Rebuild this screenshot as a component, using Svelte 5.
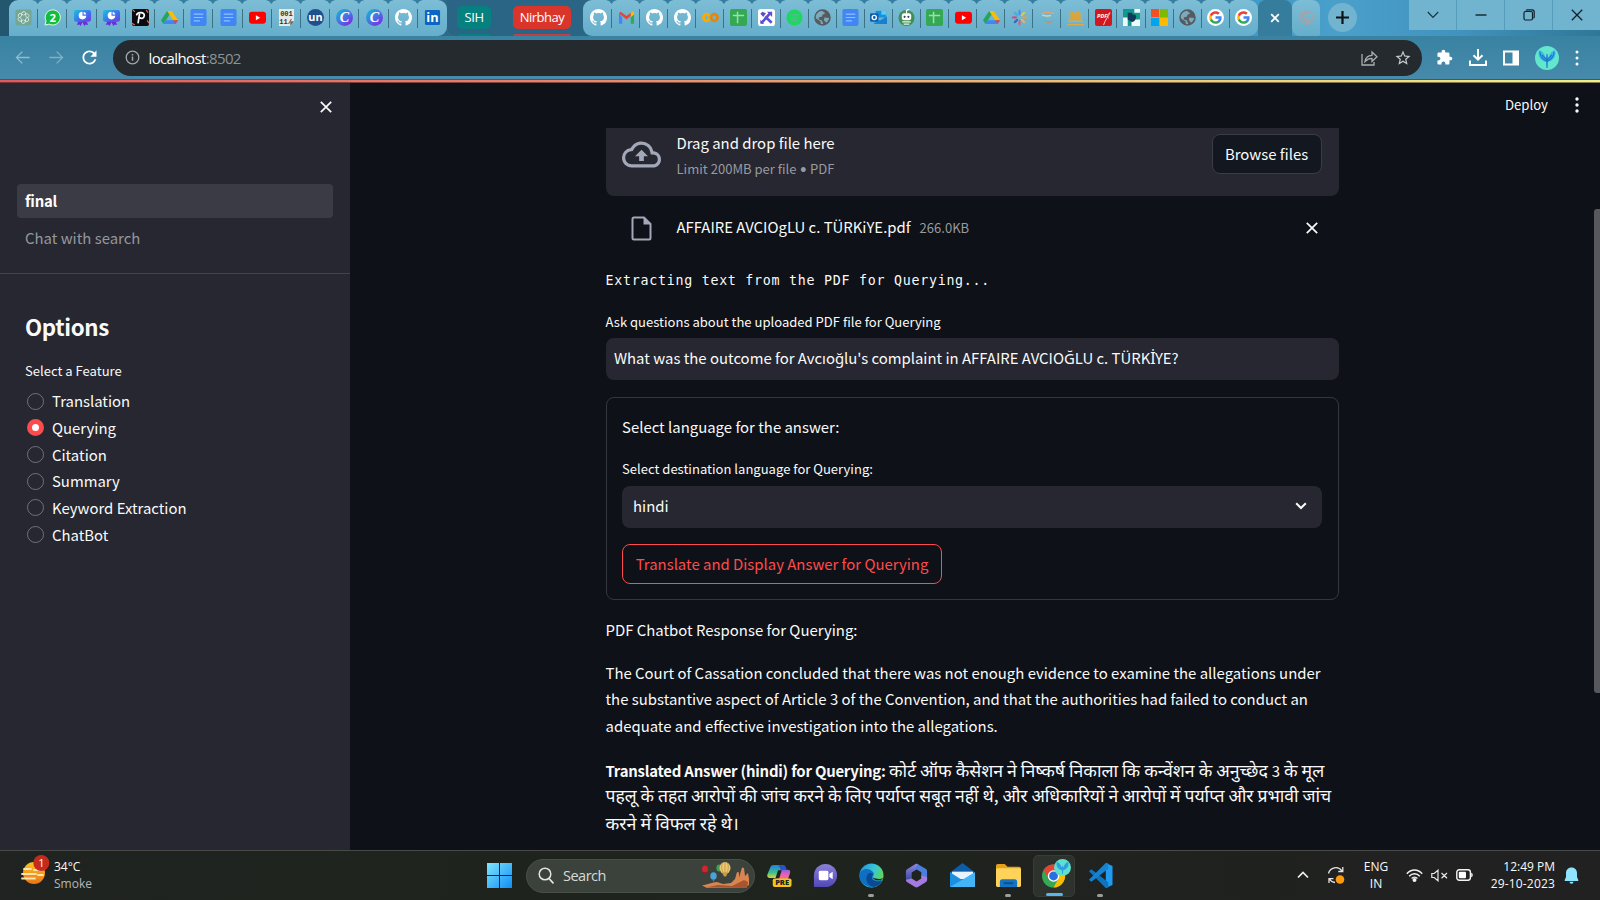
<script>
  const groupA = ['gpt', 'wa', 'ppt', 'ppt', 'pi', 'drive', 'docs', 'docs', 'yt', 'bin', 'un', 'canva', 'canva', 'gh', 'li'];
  const groupB = ['gh', 'gmail', 'gh', 'gh', 'colab', 'sheets', 'px', 'spot', 'globe', 'docs', 'outlook', 'bot', 'sheets', 'yt', 'drive', 'burst', 'swirl', 'gold', 'pdf', 'teal', 'ms', 'globe', 'goog', 'goog'];
  const features = ['Translation', 'Querying', 'Citation', 'Summary', 'Keyword Extraction', 'ChatBot'];
  const apps = ['copilot', 'meet', 'edge', 'm365', 'mail', 'files', 'chrome', 'code'];
  const running = ['edge', 'files', 'code'];
  const petals = [
    [0, '#4a90e2'], [45, '#e8c34a'], [90, '#e0a04a'], [135, '#e8b45a'],
    [180, '#e05a7a'], [225, '#2a6fc0'], [270, '#d04a8a'], [315, '#3fb0e0']
  ];
  let selected = $state('Querying');
</script>

{#snippet fav(name)}
  <svg class="fav" viewBox="0 0 18 18">
    {#if name === 'gpt'}
      <rect x=".5" y=".5" width="17" height="17" rx="2" fill="#74a694" />
      <g fill="none" stroke="#e4f2ee" stroke-width=".9">
        {#each [0, 60, 120, 180, 240, 300] as a}
          <path d="M9 6.300l2.600-1.500a2.600 2.600 0 0 1 3.600 3.400L12 10.200" transform="translate(1 1) scale(.89) rotate({a} 9 9)" />
        {/each}
      </g>
    {:else if name === 'wa'}
      <path d="M1 17l1.200-4.300A8 8 0 1 1 5.500 16z" fill="#12bd3c" stroke="#e9fff0" stroke-width="1" />
      <text x="9.200" y="13.300" font-size="12" font-weight="700" fill="#fff" text-anchor="middle">2</text>
    {:else if name === 'ppt'}
      <path d="M5 12l-2 5 2.500-.7 1.500 1.700 2-4 2 4 1.500-1.700 2.500.7-2-5z" fill="#6a2fd8" />
      <rect x="0" y="1" width="18" height="12.500" rx="2.500" fill="url(#gPpt)" />
      <circle cx="9" cy="7" r="4" fill="#fff" />
      <path d="M9.600 2.500v4h4" stroke="#4a6ef0" stroke-width="1.200" fill="none" />
    {:else if name === 'pi'}
      <rect width="18" height="18" rx="2" fill="#0b0a10" />
      <path d="M1 1l2 2M15 1l2 3M0 15l3 2M16 12l2 3" stroke="#e0694a" stroke-width="1.300" />
      <path d="M6.500 14.500L8 5M5 6c1-3 8.500-3 8 1-.4 3-3 3.500-4.700 2.300" stroke="#fff" stroke-width="1.800" fill="none" stroke-linecap="round" />
    {:else if name === 'drive'}
      <path d="M6.500 2h5L18 12h-5z" fill="#fbbc04" />
      <path d="M6.500 2L0 12l2.600 4L9 6z" fill="#23a55a" />
      <path d="M5 12h13l-2.600 4H2.600z" fill="#4285f4" />
      <path d="M13 12h5l-2.600 4z" fill="#ea4335" />
    {:else if name === 'docs'}
      <rect x=".5" width="17" height="18" rx="2" fill="#4285f4" />
      <path d="M4 5.500h10M4 9h10M4 12.500h6.500" stroke="#8fc0ff" stroke-width="1.300" />
    {:else if name === 'yt'}
      <rect x="0" y="3" width="18" height="12.500" rx="3" fill="#f00" />
      <path d="M7.300 6.500v5.400l4.600-2.700z" fill="#fff" />
    {:else if name === 'bin'}
      <path d="M1 0h16v13l-4 5H1z" fill="#e9e9e4" />
      <path d="M17 13l-4 5v-5z" fill="#6b6b66" />
      <text x="9" y="7.500" font-size="7.500" font-weight="700" fill="#333" text-anchor="middle" font-family="Liberation Mono, monospace">001</text>
      <text x="8" y="15.500" font-size="7.500" font-weight="700" fill="#333" text-anchor="middle" font-family="Liberation Mono, monospace">11/</text>
    {:else if name === 'un'}
      <circle cx="9" cy="9" r="9" fill="#1f4f8c" />
      <text x="9" y="12.500" font-size="11.500" font-weight="700" fill="#fff" text-anchor="middle">un</text>
    {:else if name === 'canva'}
      <circle cx="9" cy="9" r="9" fill="url(#gCanva)" />
      <text x="9" y="14" font-size="15" font-style="italic" font-weight="700" fill="#fff" text-anchor="middle" font-family="Liberation Serif, serif">C</text>
    {:else if name === 'gh'}
      <path transform="scale(1.125)" fill="#fff" d="M8 0C3.580 0 0 3.580 0 8c0 3.540 2.290 6.530 5.470 7.590.4.070.55-.17.55-.38 0-.19-.01-.82-.01-1.490-2.010.37-2.530-.49-2.690-.94-.09-.23-.48-.94-.82-1.130-.28-.15-.68-.52-.01-.53.63-.01 1.080.58 1.230.82.72 1.210 1.870.87 2.330.66.070-.52.28-.87.51-1.070-1.780-.2-3.640-.89-3.640-3.950 0-.87.31-1.590.82-2.150-.08-.2-.36-1.020.08-2.120 0 0 .67-.21 2.200.82.64-.18 1.320-.27 2-.27.68 0 1.360.09 2 .27 1.530-1.040 2.200-.82 2.200-.82.44 1.100.16 1.920.08 2.120.51.56.82 1.270.82 2.150 0 3.070-1.870 3.750-3.650 3.950.29.25.54.73.54 1.480 0 1.070-.01 1.930-.01 2.200 0 .21.15.46.55.38A8.013 8.013 0 0016 8c0-4.420-3.580-8-8-8z" />
    {:else if name === 'li'}
      <rect x="1" y="1" width="16" height="16" rx="1.500" fill="#0a66c2" />
      <text x="9" y="14" font-size="13.500" font-weight="700" fill="#fff" text-anchor="middle">in</text>
    {:else if name === 'gmail'}
      <path d="M1 4v11.500h3.500V9z" fill="#4285f4" />
      <path d="M17 4v11.500h-3.500V9z" fill="#34a853" />
      <path d="M1 4.500L9 11l8-6.500-2-1.700-6 4.600-6-4.600z" fill="#ea4335" />
      <path d="M13.500 4v4.500L17 6V4c0-1.500-2-2-3.500 0z" fill="#fbbc04" />
    {:else if name === 'colab'}
      <g fill="none" stroke-width="3"><circle cx="5" cy="9" r="3.500" stroke="#f9ab00" /><circle cx="13" cy="9" r="3.500" stroke="#e8860c" /></g>
    {:else if name === 'sheets'}
      <rect width="18" height="18" rx="2" fill="#34a853" />
      <path d="M3 7h12M8 3v12" stroke="#9be0ac" stroke-width="1.600" />
    {:else if name === 'px'}
      <rect width="18" height="18" rx="3" fill="#fff" />
      <path d="M3.500 15l9-10M14.500 14.500L7.500 8" stroke="#5b4fd0" stroke-width="2.800" />
      <path d="M9.500 3H15v5.500zM2.500 5l2-2 4 1.500-3 4zM2.500 11.500v4h4z" fill="#5b4fd0" />
    {:else if name === 'spot'}
      <circle cx="9" cy="9" r="8.500" fill="#1ed760" />
      <path d="M4 6.500c3.500-1 7-.6 10 .9M4.700 9.500c3-.8 6-.4 8.300.8M5.300 12.200c2.400-.6 4.700-.3 6.700.7" stroke="#58b98c" stroke-width="1.500" fill="none" />
    {:else if name === 'globe'}
      <circle cx="9" cy="9" r="8" fill="#555b5f" />
      <path d="M8 1.500c-4 .4-7 4-6.500 8L5 12l2 1.200V15l1 1.500c1-.1 1.600-.4 1.800-1.200L8 12l-3-1V9l3.500-1 .5-2 3-1.600z" fill="#82b9cd" opacity=".85" />
      <path d="M11 9l5 .5c-.3 2-1.400 3.800-3 5l-2.500-2.500z" fill="#82b9cd" opacity=".85" />
      <circle cx="9" cy="9" r="8" fill="none" stroke="#555b5f" stroke-width="1.500" />
    {:else if name === 'outlook'}
      <path d="M6 2h11v7H6z" fill="#1490df" /><path d="M12 2h5v4h-5z" fill="#50d0ff" />
      <path d="M4 8l7 4.500L18 8v8H4z" fill="#2aa0e8" /><path d="M4 16l14-8v8z" fill="#1a7fd0" />
      <rect x="0" y="4.500" width="9" height="9" rx="1" fill="#0f5fb5" />
      <circle cx="4.500" cy="9" r="2.200" fill="none" stroke="#fff" stroke-width="1.400" />
    {:else if name === 'bot'}
      <circle cx="9" cy="9.500" r="8.500" fill="#3f8f55" />
      <path d="M9 5V1.500l3-1.200" stroke="#fff" fill="none" stroke-width="1.200" />
      <rect x="4" y="4.500" width="10" height="7.500" rx="2.500" fill="#fff" />
      <circle cx="7" cy="8.300" r="1.100" fill="#345" /><circle cx="11" cy="8.300" r="1.100" fill="#345" />
      <path d="M4.500 13.700h9M6 16h6" stroke="#e8f5ea" stroke-width="1.300" />
    {:else if name === 'burst'}
      {#each petals as [a, c]}
        <ellipse cx="9" cy="3.600" rx="1.200" ry="3" fill={c} transform="rotate({a} 9 9)" />
      {/each}
    {:else if name === 'swirl'}
      <g fill="none" stroke-width="1.500" stroke-linecap="round">
        <path d="M3 5c3-2 8-1.500 12-.5" stroke="#e8a070" /><path d="M4 6.500c3 1.500 6 1 8 .5" stroke="#d8d4b0" />
        <path d="M6 9c-1 1.500-.5 3 1 4.200" stroke="#5bb8c8" /><path d="M8 13.500c2 .6 4 .3 5.500-.7" stroke="#e0884a" />
      </g>
    {:else if name === 'gold'}
      <path d="M3 3v9M5.500 2v10M8 4v8M10 3v9M12.500 2v10M15 4v8" stroke="#dba63c" stroke-width="1.800" />
      <path d="M1 13h16M0 16.500h18" stroke="#e0aa3c" stroke-width="1.500" />
    {:else if name === 'pdf'}
      <rect width="18" height="18" rx="2" fill="#d3171f" />
      <text x="7.500" y="10" font-size="6" font-weight="700" font-style="italic" fill="#fff" text-anchor="middle">PDF</text>
      <path d="M9 17c2-6 5-9 7-13-3 1-3 4-2 6" stroke="#ffd0cf" fill="none" />
    {:else if name === 'teal'}
      <rect width="18" height="18" fill="#13998c" />
      <path d="M0 9h5v9H0zM12 0h6v4h-6zM13 11h5v7H9v-4z" fill="#eefaf9" />
      <path d="M5 4h5v2c3-1 5 1 3.500 4-.8 3-3 4-4.500 3.500L5 11z" fill="#12395a" />
    {:else if name === 'ms'}
      <path d="M0 0h8.500v8.500H0z" fill="#f25022" /><path d="M9.500 0H18v8.500H9.500z" fill="#7fba00" />
      <path d="M0 9.500h8.500V18H0z" fill="#00a4ef" /><path d="M9.500 9.500H18V18H9.500z" fill="#ffb900" />
    {:else if name === 'goog'}
      <circle cx="9" cy="9" r="9" fill="#fff" />
      <g transform="translate(1.700 1.700) scale(.61)">
        <path fill="#4285f4" d="M22.560 12.250c0-.78-.07-1.530-.2-2.250H12v4.260h5.920c-.26 1.370-1.040 2.530-2.210 3.310v2.770h3.570c2.080-1.920 3.280-4.740 3.280-8.090z" />
        <path fill="#34a853" d="M12 23c2.970 0 5.460-.98 7.280-2.660l-3.570-2.770c-.98.66-2.230 1.060-3.710 1.060-2.860 0-5.290-1.930-6.160-4.530H2.180v2.840C3.990 20.530 7.700 23 12 23z" />
        <path fill="#fbbc05" d="M5.840 14.090c-.22-.66-.35-1.360-.35-2.090s.13-1.430.35-2.090V7.070H2.180C1.430 8.550 1 10.220 1 12s.43 3.450 1.180 4.930l2.850-2.220.81-.62z" />
        <path fill="#ea4335" d="M12 5.380c1.620 0 3.060.56 4.210 1.640l3.150-3.150C17.450 2.090 14.970 1 12 1 7.700 1 3.990 3.470 2.180 7.070l3.660 2.840c.87-2.600 3.300-4.530 6.160-4.530z" />
      </g>
    {/if}
  </svg>
{/snippet}

{#snippet app(name)}
  <svg class="appicon" viewBox="0 0 26 26">
    {#if name === 'copilot'}
      <path d="M7 2h9l-4.500 13.500H3c-2.200 0-3.200-1.600-2.600-3.500L3.500 4.500C4.200 2.800 5.200 2 7 2z" fill="url(#gCop1)" />
      <path d="M12 2h5c2 0 2.600 1.500 3.300 5h-6z" fill="#2457c4" />
      <path d="M13.500 7h8.300c2 0 2.700 1.500 2.200 3.200l-2.500 8H10.500z" fill="url(#gCop2)" />
      <path d="M11.500 7.500h3.800l-2.600 8.500H8.700z" fill="#1e251d" />
      <rect x="6" y="16" width="19.500" height="9" rx="2" fill="#f7c416" />
      <text x="15.700" y="23.400" font-size="7.800" font-weight="800" fill="#222" text-anchor="middle">PRE</text>
    {:else if name === 'meet'}
      <path d="M1 25V13A12 12 0 1 1 13 25z" fill="url(#gMeet)" />
      <rect x="6" y="8" width="10" height="10" rx="1.500" fill="#fff" /><path d="M17 11.500l3.500-2.500v8L17 14.500z" fill="#fff" />
    {:else if name === 'edge'}
      <circle cx="13" cy="13" r="12.500" fill="url(#gEdge)" />
      <path d="M.5 12C3 4 12 5 15 10c1 2-.5 3.500-1 4.500-1 3 3 5 10 3-3 7-12 10-18 5C2 20 .3 16 .5 12z" fill="#0f6fc4" />
      <path d="M9 12c-3 4-1 11 6 13 4 0 7-3 9-6.500-5 2-10 0-10.500-3.500-.2-1.400 1-2.500 1-3.500-1-1.500-4-1.500-5.500.5z" fill="#0a4a94" />
      <path d="M14 14.500c1 3.500 5 4 9.500 3 2-1.500 2.300-2 2-2-3 1.500-8 1.500-11.500-1z" fill="#1d231d" />
    {:else if name === 'm365'}
      <path d="M12 1L4 6c-1.300.8-2 1.500-2 3v8.500l6 .5V10l7-4.500V1.500c-1-.8-2-1-3-.5z" fill="url(#gM1)" />
      <path d="M14 1l8.500 5c1 .6 1.500 1.500 1.500 2.500V18l-6-3V9.500L12 6z" fill="#4c7fdc" />
      <path d="M24 14.500v3c0 1-.5 2-1.500 2.500L14.500 25c-1 .5-2 .5-3 0L3.500 20c-1-.6-1.500-1.500-1.500-2.500l6-1.500 5 3.200 5-3.200v-3z" fill="#a47ae0" />
    {:else if name === 'mail'}
      <path d="M0 10L13 0l13 10v5H0z" fill="#0e5ca8" /><path d="M2 9h22v8H2z" fill="#e8f3fb" />
      <path d="M0 9.500L13 18l13-8.500V25H0z" fill="#1a8fe0" /><path d="M0 25l26-15.500V25z" fill="#43b5f5" />
    {:else if name === 'files'}
      <path d="M0 3c0-1 .6-2 2-2h7l3 3h12c1 0 2 .8 2 2v5H0z" fill="#e6a11c" />
      <rect x="0" y="5.500" width="26" height="19.500" rx="1.500" fill="#ffd35a" />
      <path d="M4 25v-5.500c0-1.500 1-2.500 2.500-2.500h13c1.500 0 2.500 1 2.500 2.500V25z" fill="#1573c4" /><path d="M8 20h10v2H8z" fill="#0b4f90" />
    {:else if name === 'chrome'}
      <circle cx="12" cy="13.500" r="12" fill="#34a853" />
      <path d="M12 13.500L1.600 7.500A12 12 0 0 1 22.400 7.500z" fill="#ea4335" />
      <path d="M12 13.500L22.400 7.500A12 12 0 0 1 12 25.500L17 16.500z" fill="#fbbc04" />
      <path d="M1.600 7.500L7 16.500l5-3z" fill="#ea4335" />
      <circle cx="12" cy="13.500" r="6" fill="#fff" /><circle cx="12" cy="13.500" r="4.600" fill="#2a6fe0" />
    {:else if name === 'code'}
      <path d="M18.500 0L25.500 3.200V22.800L18.500 26z" fill="#1f9cf0" />
      <path d="M1 8.500l2.500-2L21 20v5.500L18.500 26z" fill="#0f73bd" />
      <path d="M1 17.500l2.500 2L21 6V.5L18.500 0z" fill="#1583d0" />
    {/if}
  </svg>
{/snippet}

<svg width="0" height="0" class="defs">
  <defs>
    <linearGradient id="gPpt" x1="0" y1="0" x2="1" y2="1"><stop offset="0" stop-color="#19c3dc" /><stop offset=".6" stop-color="#3f6cf0" /><stop offset="1" stop-color="#7a35e6" /></linearGradient>
    <linearGradient id="gCanva" x1="0" y1="0" x2=".8" y2="1"><stop offset="0" stop-color="#10bfcc" /><stop offset=".55" stop-color="#4a72e4" /><stop offset="1" stop-color="#7a2be0" /></linearGradient>
    <linearGradient id="gWin" x1="0" y1="0" x2="1" y2="1"><stop offset="0" stop-color="#7fe6fd" /><stop offset="1" stop-color="#0f8df5" /></linearGradient>
    <linearGradient id="gCop1" x1="0" y1="0" x2="0" y2="1"><stop offset="0" stop-color="#1f7fe8" /><stop offset=".6" stop-color="#3fc08a" /><stop offset="1" stop-color="#e0d040" /></linearGradient>
    <linearGradient id="gCop2" x1="0" y1="0" x2="0" y2="1"><stop offset="0" stop-color="#8a5fe0" /><stop offset=".4" stop-color="#e060c0" /><stop offset="1" stop-color="#f08060" /></linearGradient>
    <linearGradient id="gMeet" x1="0" y1="0" x2="0" y2="1"><stop offset="0" stop-color="#8a80dc" /><stop offset="1" stop-color="#5148b8" /></linearGradient>
    <linearGradient id="gEdge" x1="0" y1="0" x2="1" y2=".4"><stop offset="0" stop-color="#1f8fe0" /><stop offset=".6" stop-color="#36c6d8" /><stop offset="1" stop-color="#5fd65a" /></linearGradient>
    <linearGradient id="gM1" x1="0" y1="0" x2="0" y2="1"><stop offset="0" stop-color="#8f86e8" /><stop offset="1" stop-color="#3b4a9c" /></linearGradient>
    <linearGradient id="gSun" x1="0" y1="0" x2="0" y2="1"><stop offset="0" stop-color="#f9c51f" /><stop offset="1" stop-color="#ec7417" /></linearGradient>
  </defs>
</svg>

<div class="screen">
  <header class="tabstrip">
    <div class="tabs first">
      {#each groupA as t}<div class="tab a">{@render fav(t)}</div>{/each}
    </div>
    <div class="groups">
      <div class="group sih"><span>SIH</span></div>
      <div class="group nir"><span>Nirbhay</span></div>
    </div>
    <div class="tabs second">
      {#each groupB as t}<div class="tab b">{@render fav(t)}</div>{/each}
    </div>
    <div class="active-tab">
      <svg width="10" height="10" viewBox="0 0 10 10"><path d="M1.200 1.200l7.600 7.600M8.800 1.200L1.200 8.800" stroke="#fff" stroke-width="1.800" /></svg>
    </div>
    <div class="tab lone">
      <svg class="fav" viewBox="0 0 24 24"><path fill="#a3a4ab" d="M12 2C6.480 2 2 6.480 2 12s4.480 10 10 10 10-4.480 10-10S17.520 2 12 2zm-1 17.930c-3.950-.49-7-3.850-7-7.930 0-.62.08-1.210.21-1.790L9 15v1c0 1.100.9 2 2 2v1.930zm6.900-2.540c-.26-.81-1-1.390-1.900-1.390h-1v-3c0-.55-.45-1-1-1H8v-2h2c.55 0 1-.45 1-1V7h2c1.100 0 2-.9 2-2v-.41c2.930 1.190 5 4.060 5 7.410 0 2.080-.8 3.970-2.100 5.390z" /></svg>
    </div>
    <div class="newtab"><svg width="13" height="13" viewBox="0 0 13 13"><path d="M6.500 0v13M0 6.500h13" stroke="#0c1216" stroke-width="2.200" /></svg></div>
    <div class="winctl">
      <div><svg width="12" height="8" viewBox="0 0 12 8"><path d="M.8 1l5.200 5.500L11.200 1" fill="none" stroke="#1c3440" stroke-width="1.200" /></svg></div>
      <div><svg width="12" height="8" viewBox="0 0 12 8"><path d="M.5 4h11" stroke="#0d1a22" stroke-width="1.300" /></svg></div>
      <div><svg width="12" height="12" viewBox="0 0 12 12" fill="none" stroke="#10202a" stroke-width="1.200"><rect x="1" y="2.500" width="8.500" height="8.500" rx="1.500" /><path d="M3 1.500Q3.500.8 4.500.8H9q2.200 0 2.200 2.200v5q0 .8-.8 1.200" /></svg></div>
      <div><svg width="12" height="12" viewBox="0 0 12 12"><path d="M.8.8l10.400 10.400M11.200.8L.8 11.200" stroke="#10202a" stroke-width="1.300" /></svg></div>
    </div>
  </header>

  <div class="toolbar">
    <svg class="nav" viewBox="0 0 24 24" fill="#8fbdd0"><path d="M21 11.200H6.400l6-6L11.200 4l-8 8 8 8 1.200-1.200-6-6H21z" /></svg>
    <svg class="nav" viewBox="0 0 24 24" fill="#7fb1c7"><path d="M3 11.200h14.600l-6-6L12.800 4l8 8-8 8-1.200-1.200 6-6H3z" /></svg>
    <svg class="nav reload" viewBox="0 0 24 24" fill="#fff"><path d="M17.650 6.350C16.200 4.900 14.210 4 12 4c-4.420 0-7.990 3.580-7.990 8s3.570 8 7.990 8c3.730 0 6.840-2.550 7.730-6h-2.080c-.82 2.330-3.040 4-5.650 4-3.310 0-6-2.690-6-6s2.690-6 6-6c1.660 0 3.140.69 4.220 1.780L13 11h7V4l-2.350 2.350z" /></svg>
    <div class="omnibox">
      <svg width="15" height="15" viewBox="0 0 15 15"><circle cx="7.500" cy="7.500" r="6.300" fill="none" stroke="#a2a7aa" stroke-width="1.300" /><path d="M7.500 6.500v4.200M7.500 3.900v1.500" stroke="#a2a7aa" stroke-width="1.500" /></svg>
      <span class="url">localhost<i>:8502</i></span>
      <svg class="share" width="17" height="16" viewBox="0 0 17 16" fill="none" stroke="#abb0b2" stroke-width="1.300"><path d="M1 4v11h12v-3M4 11.500C4.500 8 7 5.500 11 5.300V2l5 4.800-5 4.700V8.300c-3 0-5 1-7 3.200z" /></svg>
      <svg width="18" height="18" viewBox="0 0 24 24" fill="#c6cacc"><path d="M22 9.240l-7.190-.62L12 2 9.190 8.630 2 9.240l5.460 4.730L5.820 21 12 17.270 18.180 21l-1.630-7.030L22 9.240zM12 15.400l-3.760 2.270 1-4.280-3.320-2.880 4.380-.38L12 6.100l1.710 4.040 4.380.38-3.320 2.880 1 4.280L12 15.400z" /></svg>
    </div>
    <div class="actions">
      <svg width="17" height="17" viewBox="0 0 24 24" fill="#fff"><path d="M20.500 11H19V7c0-1.100-.9-2-2-2h-4V3.500C13 2.120 11.880 1 10.500 1S8 2.120 8 3.500V5H4c-1.100 0-1.990.9-1.990 2v3.800H3.500c1.490 0 2.700 1.210 2.700 2.700s-1.210 2.700-2.700 2.700H2V20c0 1.100.9 2 2 2h3.800v-1.500c0-1.490 1.210-2.700 2.700-2.700 1.490 0 2.700 1.210 2.700 2.700V22H17c1.100 0 2-.9 2-2v-4h1.500c1.380 0 2.500-1.120 2.500-2.500S21.880 11 20.500 11z" /></svg>
      <svg width="18" height="17" viewBox="0 0 18 17" fill="none" stroke="#fff" stroke-width="2"><path d="M9 0v10M4.500 6.200L9 10.700l4.500-4.500M1 11.500V16h16v-4.500" /></svg>
      <svg width="16" height="16" viewBox="0 0 16 16"><rect x="1" y="1.500" width="14" height="13" fill="none" stroke="#fff" stroke-width="2" /><path d="M9.500 2H15v12H9.500z" fill="#fff" /></svg>
      <svg width="24" height="24" viewBox="0 0 24 24"><circle cx="12" cy="12" r="12" fill="#62e6cc" /><path d="M4 4c-1.500 6 1 10 7 12l.5 4h1l.5-4c6-2 8.500-6 7-12-3 1-5.500 3.500-6.500 8L12 9l-1.500 3C9.500 7.500 7 5 4 4z" fill="#3db4ea" /><path d="M12 8v14M5 6c0 4 2 7 7 9.500M19 6c0 4-2 7-7 9.500M7 9c1 1 3 3 5 5M17 9c-1 1-3 3-5 5" stroke="#1a78c8" fill="none" stroke-width="1.100" /></svg>
      <svg width="4" height="16" viewBox="0 0 4 16" fill="#fff"><circle cx="2" cy="2" r="1.500" /><circle cx="2" cy="8" r="1.500" /><circle cx="2" cy="14" r="1.500" /></svg>
    </div>
  </div>
  <div class="decor"></div>

  <div class="page">
    <aside>
      <div class="closebar"><svg width="12" height="12" viewBox="0 0 12 12"><path d="M.8.8l10.400 10.400M11.200.8L.8 11.200" stroke="#fafafa" stroke-width="1.700" /></svg></div>
      <nav>
        <div class="navitem on">final</div>
        <div class="navitem">Chat with search</div>
      </nav>
      <div class="options">
        <h2>Options</h2>
        <p class="lab">Select a Feature</p>
        {#each features as f}
          <label class="opt"><input type="radio" value={f} bind:group={selected} /><i class:sel={selected === f}></i><span>{f}</span></label>
        {/each}
      </div>
    </aside>

    <main>
      <div class="topbar">
        <span>Deploy</span>
        <svg width="4" height="16" viewBox="0 0 4 16" fill="#fafafa"><circle cx="2" cy="2" r="1.700" /><circle cx="2" cy="8" r="1.700" /><circle cx="2" cy="14" r="1.700" /></svg>
      </div>
      <div class="scroll">
        <div class="column">
          <section class="drop">
            <svg width="39" height="39" viewBox="0 0 24 24" fill="#a3a8b8"><path d="M19.350 10.040A7.490 7.490 0 0012 4C9.110 4 6.600 5.640 5.350 8.040A5.994 5.994 0 000 14c0 3.310 2.690 6 6 6h13c2.760 0 5-2.240 5-5 0-2.640-2.050-4.780-4.650-4.960zM19 18H6c-2.210 0-4-1.790-4-4 0-2.050 1.530-3.760 3.560-3.970l1.070-.11.5-.95A5.469 5.469 0 0112 6c2.620 0 4.880 1.860 5.390 4.430l.3 1.500 1.530.11A2.980 2.980 0 0122 15c0 1.650-1.350 3-3 3zM8 13h2.550v3h2.900v-3H16l-4-4z" /></svg>
            <div class="dtext"><span>Drag and drop file here</span><small>Limit 200MB per file <b class="dot">•</b> PDF</small></div>
            <button class="browse">Browse files</button>
          </section>
          <section class="file">
            <svg width="21" height="25" viewBox="0 0 21 25"><path d="M3 1.500h10l6.500 6.500v14q0 1.500-1.500 1.500H3q-1.500 0-1.500-1.500V3q0-1.500 1.500-1.500z" fill="none" stroke="#a3a8b8" stroke-width="2" /><path d="M12.500 1L20 8.500h-7.500z" fill="#a3a8b8" /></svg>
            <span class="fname">AFFAIRE AVCIOgLU c. TÜRKiYE.pdf</span><small>266.0KB</small>
            <svg class="x" width="12" height="12" viewBox="0 0 12 12"><path d="M.8.8l10.400 10.400M11.200.8L.8 11.200" stroke="#fafafa" stroke-width="1.700" /></svg>
          </section>
          <p class="mono">Extracting text from the PDF for Querying...</p>
          <p class="lab ask">Ask questions about the uploaded PDF file for Querying</p>
          <div class="field"><span>What was the outcome for Avcıoğlu's complaint in AFFAIRE AVCIOĞLU c. TÜRK<b class="dotted">İ</b>YE?</span></div>
          <section class="card">
            <p class="body">Select language for the answer:</p>
            <p class="lab dest">Select destination language for Querying:</p>
            <div class="select"><span>hindi</span><svg width="12" height="8" viewBox="0 0 12 8"><path d="M1.200 1.200L6 6l4.800-4.800" fill="none" stroke="#fafafa" stroke-width="2" /></svg></div>
            <button class="go">Translate and Display Answer for Querying</button>
          </section>
          <p class="body resp">PDF Chatbot Response for Querying:</p>
          <p class="body answer"><span>The Court of Cassation concluded that there was not enough evidence to examine the allegations under</span><span>the substantive aspect of Article 3 of the Convention, and that the authorities had failed to conduct an</span><span>adequate and effective investigation into the allegations.</span></p>
          <p class="body hindi"><span><b>Translated Answer (hindi) for Querying:</b> <em class="h1">कोर्ट ऑफ कैसेशन ने निष्कर्ष निकाला कि कन्वेंशन के अनुच्छेद <small>3</small> के मूल</em></span><span><em class="h2">पहलू के तहत आरोपों की जांच करने के लिए पर्याप्त सबूत नहीं थे, और अधिकारियों ने आरोपों में पर्याप्त और प्रभावी जांच</em></span><span><em class="h3">करने में विफल रहे थे।</em></span></p>
        </div>
        <div class="thumb"></div>
      </div>
    </main>
  </div>

  <footer>
    <div class="weather">
      <svg width="30" height="32" viewBox="0 0 30 32"><circle cx="14" cy="19" r="11" fill="url(#gSun)" /><path d="M4 15h7M14 16h8M2 20h14M4 24.500h11M2 24.500h4M18 21h5" stroke="#fde3ad" stroke-width="1.800" stroke-linecap="round" /><circle cx="21.300" cy="9" r="8" fill="#c42b1c" /><text x="21.300" y="13" font-size="11" fill="#fff" text-anchor="middle">1</text></svg>
      <div class="wtext"><span>34°C</span><span class="dim">Smoke</span></div>
    </div>
    <div class="dock">
      <svg class="win" width="25" height="25" viewBox="0 0 25 25"><path d="M0 0h12v12H0zM13 0h12v12H13zM0 13h12v12H0zM13 13h12v12H13z" fill="url(#gWin)" /></svg>
      <div class="search">
        <svg width="16" height="17" viewBox="0 0 16 17"><circle cx="7" cy="7" r="5.800" fill="none" stroke="#e4e6e4" stroke-width="1.500" /><path d="M11 11.500l4 4.300" stroke="#e4e6e4" stroke-width="1.700" stroke-linecap="round" /></svg>
        <span>Search</span>
        <svg class="art" width="49" height="27" viewBox="0 0 49 27"><path d="M1 23.500c6-1.500 10-3 15-3.500l6 2 8-1 4-4 2-7 2 .5v5l3-10 2 .5 1 8 3-3 1 6v6l-6 3H6z" fill="#d98550" /><path d="M5 25.500l12-2.500 14 1 12-6 4 2-1 6z" fill="#a8552f" /><ellipse cx="4" cy="7" rx="3" ry="3.500" fill="#d3232b" /><path d="M2.500 10h3L4 13z" fill="#a01820" /><ellipse cx="12.500" cy="14" rx="3.200" ry="3.800" fill="#4aa3d8" /><path d="M11 17h3l-1.500 3z" fill="#3880b0" /><ellipse cx="18" cy="6" rx="2.600" ry="3.500" fill="#3f9f56" /><ellipse cx="24" cy="6" rx="5.500" ry="6" fill="#ecc870" /><path d="M21 10.500h6l-2 4h-2z" fill="#c89a44" /><path d="M24 0v12M21.500 1c-1.500 3-1 7 .8 10M26.500 1c1.500 3 1 7-.8 10" stroke="#b98d3c" fill="none" stroke-width=".7" /></svg>
      </div>
      {#each apps as a}
        <div class="slot" class:front={a === 'chrome'}>
          {@render app(a)}
          {#if a === 'chrome'}
            <svg class="badge" width="17" height="17" viewBox="0 0 24 24"><circle cx="12" cy="12" r="12" fill="#5fe0cc" /><path d="M4 4c-1.500 6 1 10 7 12l.5 5h1l.5-5c6-2 8.500-6 7-12-3 1-5.500 3.500-6.500 8L12 9l-1.500 3C9.500 7.500 7 5 4 4z" fill="#2d9fe0" /></svg>
          {/if}
          <i class:run={running.includes(a)} class:wide={a === 'chrome'}></i>
        </div>
      {/each}
    </div>
    <div class="tray">
      <svg width="12" height="8" viewBox="0 0 12 8"><path d="M1 6.500L6 1.500l5 5" fill="none" stroke="#f0f0f0" stroke-width="1.700" /></svg>
      <svg class="sync" width="18" height="18" viewBox="0 0 18 18" fill="none" stroke="#e4e4e4" stroke-width="1.300"><path d="M1.500 7.500A7.500 7.500 0 0 1 15 5M15.800 1v4.500h-4.500M8 16.500c-2.500-.2-4.200-1.300-5.500-3.500M2 17v-4.300h4.500" /><circle cx="13" cy="13.500" r="4.300" fill="#ff9a0a" stroke="none" /></svg>
      <div class="lang"><span>ENG</span><span>IN</span></div>
      <svg class="wifi" width="17" height="13" viewBox="0 0 17 13" fill="none" stroke="#f2f2f2" stroke-width="1.400"><path d="M.8 4.800C5-.2 12-.2 16.200 4.800M3.200 7.300c3-3.400 7.600-3.400 10.600 0M5.600 9.500c1.700-1.800 4.100-1.800 5.800 0" /><circle cx="8.500" cy="11" r="1.300" fill="#fff" /></svg>
      <svg class="vol" width="17" height="13" viewBox="0 0 17 13" fill="none" stroke="#e8e8e8" stroke-width="1.200"><path d="M.8 4.500h2.400L7 1.200v10.600L3.200 8.500H.8zM10.500 4l5.500 5.300M16 4l-5.500 5.300" /></svg>
      <svg class="bat" width="17" height="12" viewBox="0 0 17 12"><rect x=".8" y=".8" width="13.600" height="10.400" rx="2.400" fill="none" stroke="#f4f4f4" stroke-width="1.400" /><path d="M15.200 3.800q1.600.4 1.600 2.200t-1.600 2.200z" fill="#f4f4f4" /><rect x="2.800" y="2.800" width="7.200" height="6.400" rx="1" fill="#fff" /></svg>
      <div class="clock"><span>12:49 PM</span><span class="date">29-10-2023</span></div>
      <svg class="bell" width="15" height="17" viewBox="0 0 15 17" fill="#8fe3ff"><path d="M7.500.5C4 .5 2 3 2 6v4L.7 13c-.2.500.1 1 .6 1h12.400c.5 0 .8-.5.6-1L13 10V6c0-3-2-5.500-5.500-5.500zM5.500 14.800a2 2 0 0 0 4 0z" /></svg>
    </div>
  </footer>
</div>

<style>
  :global(body) { background: #0e1117; overflow: hidden; }
  * { box-sizing: border-box; }
  svg { display: block; flex: none; }
  .defs { position: absolute; }
  p, h2 { margin: 0; white-space: nowrap; }
  .screen { width: 1600px; height: 900px; display: flex; flex-direction: column; overflow: hidden; font-family: "Noto Sans CJK SC", "Noto Sans", sans-serif; color: #fafafa; }
  .fav { width: 17px; height: 17px; font-family: "Open Sans", sans-serif; }

  .tabstrip { height: 36px; flex: none; display: flex; padding-left: 9px; background: linear-gradient(90deg, #23566f 0, #2f6a88 450px, #2a6684 620px, #2e7ba2 900px, #3a93bf 1150px, #4a9fcb 1340px, #4294c0 1450px, #2f7797 1600px); }
  .tabs { display: flex; background: linear-gradient(#7dbdd6, #65aecb); height: 36px; }
  .first { width: 438px; border-radius: 9px 9px 9px 0; }
  .second { width: 675px; border-radius: 9px 9px 9px 9px; padding-left: 1px; }
  .tab { flex: 1; display: flex; justify-content: center; padding-top: 9px; position: relative; }
  .tab.a + .tab.a::before, .tab.b + .tab.b::before { content: ""; position: absolute; left: -1px; top: 9px; height: 19px; width: 1px; background: #3d7186; }
  .tab.a + .tab.a::after, .tab.b + .tab.b::after { content: ""; position: absolute; left: -6px; top: 0; width: 11px; height: 4px; background: #377d9f; clip-path: polygon(0 0, 100% 0, 70% 30%, 50% 100%, 30% 30%); }
  .groups { width: 136px; display: flex; padding: 6px 0 0 10px; gap: 22px; background: #2b6585; border-radius: 0 0 10px 10px; }
  .group { height: 30px; font: 13px/23px "Open Sans", sans-serif; text-align: center; color: #fff; display: flex; flex-direction: column; justify-content: space-between; }
  .group span { border-radius: 5px; height: 23px; display: block; }
  .group::after { content: ""; height: 2.500px; border-radius: 2px 2px 0 0; }
  .sih { width: 34px; } .sih span, .sih::after { background: #078080; }
  .nir { width: 58px; } .nir span { background: #da352b; } .nir::after { background: #c33f44; }
  .sih span { letter-spacing: -.4px; } .nir span { letter-spacing: -.5px; }
  .active-tab { width: 34px; background: #367c9c; display: flex; justify-content: center; padding-top: 13px; border-radius: 8px 8px 0 0; }
  .lone { flex: none; width: 28px; background: linear-gradient(#7dbdd6, #65aecb); border-radius: 8px 8px 2px 8px; }
  .newtab { width: 29px; height: 29px; margin: 3px 0 0 8px; background: #72b4d0; border-radius: 50%; display: flex; align-items: center; justify-content: center; }
  .winctl { margin-left: auto; width: 191px; height: 30px; display: flex; background: #70b4cf; }
  .winctl div { flex: 1; display: flex; align-items: center; justify-content: center; }
  .winctl div + div { border-left: 1px solid #559dbb; }

  .toolbar { height: 43px; flex: none; background: linear-gradient(#3982a1, #478aab); display: flex; align-items: center; padding: 0 21px 0 13px; gap: 14.500px; }
  .nav { width: 19px; height: 19px; }
  .reload { width: 21px; height: 21px; margin-left: -1px; margin-right: -1px; }
  .omnibox { margin-left: -1px; width: 1309px; height: 36px; border-radius: 18px; background: #242a2d; display: flex; align-items: center; padding: 0 10px 0 12px; }
  .url { margin-left: 9px; font: 15px/20px "Open Sans", sans-serif; letter-spacing: -.63px; flex: 1; color: #fff; }
  .url i { font-style: normal; color: #8d9396; }
  .share { margin-right: 16px; }
  .actions { display: flex; align-items: center; justify-content: space-between; flex: 1; }
  .decor { height: 4px; flex: none; border-top: 1px solid #335f74; border-bottom: 1px solid rgba(14, 17, 23, .5); background: linear-gradient(90deg, #e05a5a, #e9826a 35%, #f0c47a 70%, #f2ee88) border-box; }

  .page { height: 767px; flex: none; display: flex; }
  aside { width: 350px; background: #262730; display: flex; flex-direction: column; }
  .closebar { height: 101px; padding: 18px 18.500px 0; display: flex; justify-content: flex-end; align-items: flex-start; }
  nav { height: 90px; border-bottom: 1px solid #42434b; padding: 0 17px; display: flex; flex-direction: column; gap: 4px; }
  .navitem { height: 33.500px; border-radius: 4px; padding-left: 8px; font-size: 14.900px; line-height: 32px; color: #96979d; }
  .navitem.on { background: #3b3b46; color: #fff; font-weight: 700; letter-spacing: -.2px; line-height: 33px; }
  .options { padding: 32px 25px 0; }
  h2 { font-size: 22.300px; font-weight: 700; line-height: 40px; letter-spacing: -.35px; }
  .lab { font-size: 13.050px; line-height: 20px; }
  .options .lab { margin: 15px 0 7px; }
  .opt { display: flex; align-items: center; height: 26.670px; font-size: 14.900px; line-height: 26px; white-space: nowrap; }
  .opt input { display: none; }
  .opt i { width: 17px; height: 17px; margin: 0 8px 0 2px; border: 1.500px solid #70717a; border-radius: 50%; }
  .opt i.sel { border: 5.500px solid #ff4b4b; background: #fff; }

  main { flex: 1; background: #0e1117; display: flex; flex-direction: column; min-width: 0; }
  .topbar { height: 45px; flex: none; display: flex; justify-content: flex-end; align-items: center; padding: 0 21px 2px 0; gap: 27px; font-size: 13.200px; line-height: 20px; }
  .scroll { flex: 1; display: flex; justify-content: space-between; padding-left: 255.500px; min-height: 0; }
  .column { width: 733px; display: flex; flex-direction: column; }
  .thumb { width: 6px; height: 484px; margin-top: 81px; background: #56585d; border-radius: 3px 0 0 3px; }
  .drop { height: 68px; background: #262730; border-radius: 0 0 8px 8px; display: flex; align-items: flex-start; padding: 6px 17px 0 16px; }
  .drop > svg { margin: 1px 16px 0 0; }
  .dtext { display: flex; flex-direction: column; flex: 1; font-size: 14.900px; line-height: 20px; margin-top: -1px; }
  small { font-size: 13.050px; line-height: 20px; color: #989aa0; }
  .dtext small { margin-top: 6px; }
  .dot { font: 400 13px/16px Lato, "Liberation Sans", sans-serif; }
  .dotted { font: 400 16px/16px "Noto Sans", sans-serif; letter-spacing: -.8px; }
  button { font-family: inherit; font-size: 14.900px; line-height: 24px; padding: 0; text-align: center; white-space: nowrap; }
  .browse { width: 110px; height: 40px; color: #fafafa; border: 1px solid #3b3c46; border-radius: 8px; background: #131720; }
  .file { height: 64px; display: flex; align-items: center; padding: 0 21px 0 25px; }
  .fname { margin: -4px 0 0 25px; font-size: 14.900px; white-space: nowrap; }
  .file small { margin: -1px 0 0 9px; }
  .x { margin-left: auto; }
  .mono { font: 13.300px/24px "DejaVu Sans Mono", monospace; letter-spacing: .735px; margin-top: 9px; }
  .ask { margin-top: 19px; }
  .field, .select { height: 42px; background: #262730; border-radius: 8px; display: flex; align-items: center; font-size: 14.900px; line-height: 24px; white-space: nowrap; }
  .field { margin-top: 6px; padding: 0 0 2px 8.500px; }
  .card { height: 203px; margin-top: 17px; border: 1px solid #35373f; border-radius: 8px; padding: 16px 16px 0 15.500px; }
  .body { font-size: 14.920px; line-height: 26.670px; }
  .dest { margin-top: 18px; }
  .select { margin-top: 7px; padding: 0 15px 1px 11px; justify-content: space-between; }
  .go { margin-top: 16px; width: 320px; height: 40px; border: 1px solid #ff4b4b; border-radius: 8px; background: #0e1117; color: #ff4b4b; display: block; }
  .resp { margin-top: 17px; }
  .answer, .hindi { display: flex; flex-direction: column; align-items: flex-start; margin-top: 16px; white-space: nowrap; }
  .hindi span { height: 26.670px; }
  .hindi b { letter-spacing: -.22px; }
  .hindi em { font-style: normal; }
  .hindi small { font-size: 14.900px; color: inherit; }
  .h1 { font-size: 17.700px; } .h2 { font-size: 17.520px; } .h3 { font-size: 17.900px; }

  footer { height: 50px; flex: none; border-top: 1px solid #484a48; background: linear-gradient(90deg, #202321, #1e241d 30%, #1f231e 60%, #202120 85%); display: flex; font-family: "Open Sans", sans-serif; font-size: 12px; line-height: 17px; }
  .weather { width: 486px; padding: 3px 0 0 20px; display: flex; gap: 4px; }
  .wtext { display: flex; flex-direction: column; padding-top: 4px; }
  .dim { color: #b5b7b5; }
  .dock { display: flex; align-items: center; }
  .win { margin: 0 14px 0 1px; }
  .search { width: 229px; height: 34px; border-radius: 17px; background: #3b413b; border: 1px solid #494f49; display: flex; align-items: center; padding: 0 4px 0 11px; font-size: 14.500px; letter-spacing: -.5px; color: #d8dad8; margin-right: 3.500px; }
  .search span { margin-left: 9px; flex: 1; }
  .slot { width: 42px; height: 42px; margin-right: 3.800px; display: flex; flex-direction: column; align-items: center; padding-top: 8px; position: relative; border-radius: 5px; }
  .slot i { margin-top: auto; width: 6px; height: 3px; border-radius: 2px; }
  .slot i.run { background: #9c9e9c; } .slot i.wide { width: 17px; background: #58b6ea; }
  .front { background: #2d322d; border: 1px solid #373c37; padding-top: 7px; }
  .appicon { width: 25px; height: 25px; }
  .badge { position: absolute; right: 3px; top: 3px; }
  .tray { margin-left: auto; display: flex; align-items: center; padding: 0 21px 1px 0; }
  .sync { margin-left: 18px; }
  .lang { width: 40px; margin-left: 11px; display: flex; flex-direction: column; align-items: center; }
  .wifi { margin-left: 10px; } .vol { margin-left: 8px; } .bat { margin-left: 8px; }
  .clock { margin-left: 17px; width: 65px; display: flex; flex-direction: column; align-items: flex-end; white-space: nowrap; }
  .date { letter-spacing: .17px; }
  .bell { margin-left: 9px; }
</style>
